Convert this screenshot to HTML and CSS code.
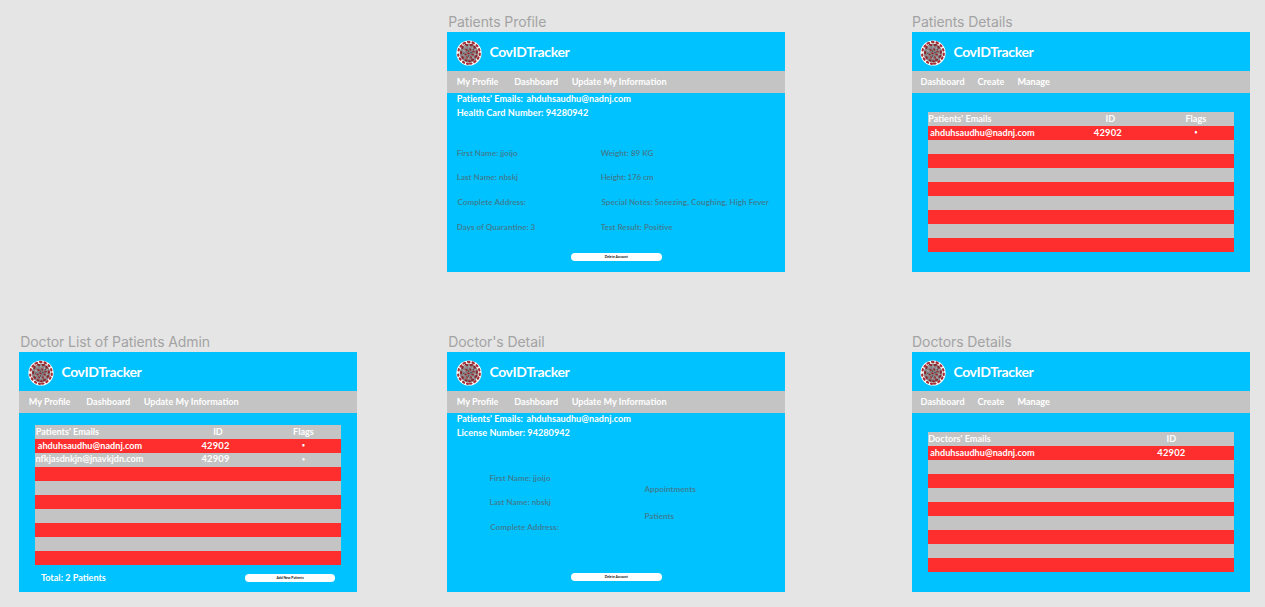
FILE: index.html
```
<!DOCTYPE html>
<html lang="en">
<head>
<meta charset="utf-8">
<title>CovIDTracker</title>
<link rel="stylesheet" href="styles.css">
</head>
<body>
<svg width="0" height="0" class="defs">
  <symbol id="virus" viewBox="0 0 26 26">
    <circle cx="13" cy="13" r="12.6" fill="#fff"/>
    <circle cx="13" cy="13" r="9.4" fill="#8a8284"/>
    <path d="M12 1.800l1.500.3M16.500 2.500l1.300.8M7.500 3.500l1.500-.6M20.500 5.200l.9 1M4.500 6.500l1-1M23 9.200l.4 1.300M2.600 10.500l.3-1.300M23.800 13.500l-.2 1.500M2.200 14.500l.2 1.200M22.500 17.500l-.7 1.200M3.800 18.500l.8 1.100M19.500 21.200l-1.200.8M7 21.800l1.200.8M15.500 23.500l-1.400.2M11 23.600l1 .2" stroke="#a52f36" stroke-width="2.2" stroke-linecap="round"/>
    <path d="M10 4.500l1.200.6M14.800 5l1.200-.2M18.200 6.800l.8 1M6.200 8l.5-1M21 11.500l-.2 1.200M5 12l.2 1.300M20.300 16l-.8.9M6.300 17l.6.9M17 19.800l-1 .4M9.600 20l1 .5M13 21.200h.8" stroke="#8d2228" stroke-width="1.900" stroke-linecap="round"/>
    <path d="M8.500 6l.8 1.500M13 5.500v2M17 7.500l-1.200 1.200M20 9.500l-2 .8M7 10.500l1.800.6M19.800 14.500l-1.800-.4M7.500 15.500l1.500-.7M17.500 18l-1-1.300M12 19l.3-1.700" stroke="#b3adae" stroke-width="1.200"/>
    <path d="M10 9.500l1 .8M14 9l.4 1M17 11.800l1-.4M12 13l1 .6M9 14.800l1-.4M14.800 17l.5 1M16 14.300l1.200.5M11 17l.3.8" stroke="#98262d" stroke-width="1.500" stroke-linecap="round"/>
    <path d="M11.800 11.500l1-.8M14.500 13l1-.9M13 15.500l-.8.9M7.500 13l.8.6M17.800 9l-.7.7" stroke="#514850" stroke-width="1.300"/>
  </symbol>
</svg>
<main class="canvas">
  <section class="artboard profile-board">
    <h2 class="label">Patients Profile</h2>
    <div class="frame">
      <header class="brand"><svg class="logo"><use href="#virus"/></svg><span>CovIDTracker</span></header>
      <nav class="nav wide"><a>My Profile</a><a>Dashboard</a><a>Update My Information</a></nav>
      <div class="identity"><p>Patients' Emails:&nbsp; <span>ahduhsaudhu@nadnj.com</span></p><p>Health Card Number: 94280942</p></div>
      <div class="details">
        <div><p>First Name: jjoijo</p><p>Last Name: nbskj</p><p class="inset">Complete Address:</p><p>Days of Quarantine: 3</p></div>
        <div><p>Weight: 89 KG</p><p class="tight">Height: 176 cm</p><p class="inset notes">Special Notes: Sneezing, Coughing, High Fever</p><p>Test Result: Positive</p></div>
      </div>
      <button class="button">Delete Account</button>
    </div>
  </section>

  <section class="artboard right">
    <h2 class="label">Patients Details</h2>
    <div class="frame">
      <header class="brand"><svg class="logo"><use href="#virus"/></svg><span>CovIDTracker</span></header>
      <nav class="nav"><a>Dashboard</a><a>Create</a><a>Manage</a></nav>
      <div class="table">
        <div class="row head"><span>Patients' Emails</span><span>ID</span><span>Flags</span></div>
        <div class="row data"><span>ahduhsaudhu@nadnj.com</span><span class="num">42902</span><span class="flag">•</span></div>
        <div class="row"></div><div class="row"></div><div class="row"></div><div class="row"></div>
        <div class="row"></div><div class="row"></div><div class="row"></div><div class="row"></div>
      </div>
    </div>
  </section>

  <section class="artboard">
    <h2 class="label">Doctor List of Patients Admin</h2>
    <div class="frame">
      <header class="brand"><svg class="logo"><use href="#virus"/></svg><span>CovIDTracker</span></header>
      <nav class="nav wide"><a>My Profile</a><a>Dashboard</a><a>Update My Information</a></nav>
      <div class="table raised">
        <div class="row head"><span>Patients' Emails</span><span>ID</span><span>Flags</span></div>
        <div class="row data"><span>ahduhsaudhu@nadnj.com</span><span class="num">42902</span><span class="flag">•</span></div>
        <div class="row third"><span>nfkjasdnkjn@jnavkjdn.com</span><span class="num">42909</span><span class="flag">•</span></div>
        <div class="row"></div><div class="row"></div><div class="row"></div><div class="row"></div>
        <div class="row"></div><div class="row"></div><div class="row"></div>
      </div>
      <footer class="summary"><span>Total: 2 Patients</span><button class="button">Add New Patients</button></footer>
    </div>
  </section>

  <section class="artboard">
    <h2 class="label">Doctor's Detail</h2>
    <div class="frame">
      <header class="brand"><svg class="logo"><use href="#virus"/></svg><span>CovIDTracker</span></header>
      <nav class="nav wide"><a>My Profile</a><a>Dashboard</a><a>Update My Information</a></nav>
      <div class="identity"><p>Patients' Emails:&nbsp; <span>ahduhsaudhu@nadnj.com</span></p><p>License Number: 94280942</p></div>
      <div class="details doctor">
        <div><p>First Name: jjoijo</p><p>Last Name: nbskj</p><p class="inset">Complete Address:</p></div>
        <div class="links"><p>Appointments</p><p>Patients</p></div>
      </div>
      <button class="button">Delete Account</button>
    </div>
  </section>

  <section class="artboard right">
    <h2 class="label">Doctors Details</h2>
    <div class="frame">
      <header class="brand"><svg class="logo"><use href="#virus"/></svg><span>CovIDTracker</span></header>
      <nav class="nav"><a>Dashboard</a><a>Create</a><a>Manage</a></nav>
      <div class="table two">
        <div class="row head"><span>Doctors' Emails</span><span>ID</span></div>
        <div class="row data"><span>ahduhsaudhu@nadnj.com</span><span class="num">42902</span></div>
        <div class="row"></div><div class="row"></div><div class="row"></div><div class="row"></div>
        <div class="row"></div><div class="row"></div><div class="row"></div><div class="row"></div>
      </div>
    </div>
  </section>
</main>
</body>
</html>
```
FILE: styles.css
```
* { box-sizing: border-box; margin: 0; padding: 0; }
body {
  width: 1265px; height: 607px; overflow: hidden;
  background: #e5e5e5; color: #fff;
  font: 700 9.1px/14px Lato, "Open Sans", sans-serif;
}
.defs { display: block; }
.canvas {
  display: grid;
  grid-template-columns: 338px 338.4px 338.2px;
  grid-template-rows: 260px 260px;
  gap: 60px 90px;
  padding: 12px 0 0 19.2px;
}
.artboard { width: 338.2px; }
.profile-board { grid-column: 2; }
.right { margin-left: 36px; }
.label {
  height: 20px; padding-left: 1px;
  font: 400 14px/19px Inter, sans-serif;
  letter-spacing: -0.09px; color: #a3a3a3; white-space: nowrap;
}
.right .label { padding-left: 0.5px; }
.frame {
  height: 240.400px; display: flex; flex-direction: column;
  background: #00c2ff; white-space: nowrap;
}
.brand {
  height: 39px; flex: none; display: flex; align-items: center; gap: 7.5px;
  padding: 2px 0 0 8.700px;
  font-size: 14px; line-height: 18px; letter-spacing: -0.36px;
}
.brand span { padding-bottom: 2px; }
.right .brand { padding-left: 8.300px; }
.logo { width: 26px; height: 26px; flex: none; }
.nav {
  height: 22px; flex: none; display: flex; gap: 13.3px;
  padding: 4px 0 0 9.500px; background: #c4c4c4;
}
.right .nav { gap: 13px; padding-left: 9px; }
.wide { gap: 13.4px; }
.wide a:first-child { margin-right: 2.400px; }
.identity { padding-left: 9.500px; margin-top: -1px; }
.identity p { letter-spacing: 0.04px; }
.identity span { margin-left: -0.8px; }
.details {
  display: grid; grid-template-columns: 144px 1fr;
  padding-left: 9.500px; margin-top: 20.900px;
  font-size: 8.100px; line-height: 24.600px;
  color: rgba(90, 90, 90, 0.66);
}
.inset { padding-left: 0.700px; letter-spacing: 0.05px; }
.notes { letter-spacing: 0.03px; }
.tight { letter-spacing: -0.18px; }
.doctor { grid-template-columns: 155px 1fr; padding-left: 42.300px; margin-top: 25.800px; }
.links { padding-top: 10.300px; line-height: 26.700px; }
.button {
  width: 90.500px; height: 8.400px; margin: auto auto 11.500px;
  border: 0; border-radius: 4.200px; background: #fff; color: #111;
  font: 700 3.400px/8px Lato, sans-serif; text-align: center;
}
.table { margin: 18.700px 16px 0 16.300px; }
.raised { margin-top: 11.500px; }
.row {
  display: grid; grid-template-columns: 143px 79px 92px;
  height: 14.060px; line-height: 13px; background: #c4c4c4;
}
.row:nth-child(even) { background: #ff2e2e; }
.row span + span { text-align: center; }
.head span:first-child { padding-left: 0.3px; }
.data span:first-child { padding-left: 2.300px; letter-spacing: 0.04px; }
.third { line-height: 12px; }
.row .num { font-size: 9.400px; letter-spacing: 0.2px; padding-right: 5px; }
.row .flag { font-size: 5px; }
.two .row { grid-template-columns: 204px 79px; }
.two .row .num { padding-right: 0; }
.summary {
  display: flex; justify-content: space-between; align-items: flex-start;
  padding: 5.700px 22px 0 21.700px;
}
.summary .button { margin: 3.300px 0 0; }
```
